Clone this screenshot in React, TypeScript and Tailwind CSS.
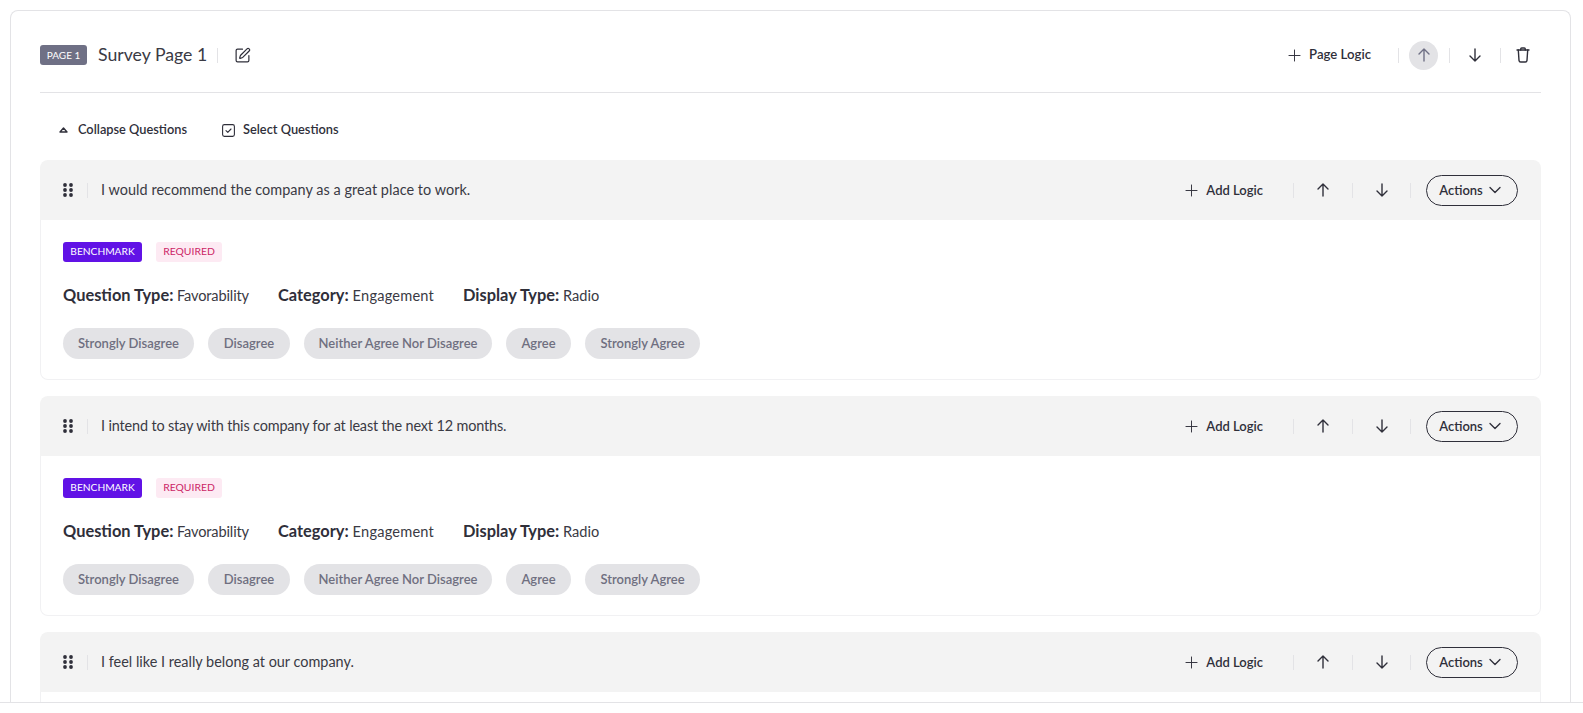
import { ChevronDown, Plus, SquarePen } from "lucide-react";

// tracking values even out width differences with the substitute font
const questions = [
  { text: "I would recommend the company as a great place to work.", className: "tracking-[0.04px]" },
  { text: "I intend to stay with this company for at least the next 12 months.", className: "tracking-[-0.150px]" },
  { text: "I feel like I really belong at our company.", className: "" },
];

const answers = [
  { label: "Strongly Disagree", className: "w-[131px]" },
  { label: "Disagree", className: "w-[82px]" },
  { label: "Neither Agree Nor Disagree", className: "w-[188px]" },
  { label: "Agree", className: "w-[65px]" },
  { label: "Strongly Agree", className: "w-[115px]" },
];

function Sep({ className = "h-[15px]" }: { className?: string }) {
  return <span className={`w-px bg-[#e3e3e6] ${className}`} />;
}

function DragDots() {
  return (
    <svg width="10" height="14" viewBox="0 0 10 14" fill="#2f2f3a">
      <circle cx="2" cy="2" r="1.9" />
      <circle cx="8" cy="2" r="1.9" />
      <circle cx="2" cy="7" r="1.9" />
      <circle cx="8" cy="7" r="1.9" />
      <circle cx="2" cy="12" r="1.9" />
      <circle cx="8" cy="12" r="1.9" />
    </svg>
  );
}

function TrashIcon() {
  return (
    <svg width="14" height="16" viewBox="0 0 14 16" fill="none" stroke="#2f2f3a" strokeWidth="1.4" strokeLinejoin="round" strokeLinecap="round" className="block">
      <path d="M1 3h12" />
      <path d="M2.300 3l.7 10.400c.1.900.7 1.600 1.600 1.600h4.800c.9 0 1.500-.7 1.600-1.600L11.700 3" />
      <path d="M4.700 3V2c0-.6.4-1 1-1h2.600c.6 0 1 .4 1 1v1" />
    </svg>
  );
}

function Arrow({ down = false, className = "" }: { down?: boolean; className?: string }) {
  return (
    <svg width="12" height="14" viewBox="0 0 12 14" fill="none" stroke="currentColor" strokeWidth="1.4" strokeLinecap="round" strokeLinejoin="round" className={`block ${className}`}>
      {down ? <path d="M6 1v12M1 8l5 5 5-5" /> : <path d="M6 13V1M1 6l5-5 5 5" />}
    </svg>
  );
}

function QuestionCard({ text, textClass, details }: { text: string; textClass: string; details: boolean }) {
  return (
    <div className="mb-[16px] shrink-0">
      <div className="flex h-[60px] items-center rounded-t-lg bg-[#f3f3f3] pl-[23px] pr-[23px]">
        <DragDots />
        <Sep className="ml-[14px] h-[15px]" />
        <span className={`ml-[13px] text-[14.450px] text-[#3a3a44] ${textClass}`}>{text}</span>
        <div className="ml-auto flex items-center text-[#2f2f3a]">
          <Plus size={19} strokeWidth={1.2} />
          <span className="ml-[5.500px] mt-[2px] text-[13px] font-semibold">Add Logic</span>
          <Sep className="ml-[30px] h-[15px]" />
          <Arrow className="ml-[23px] mr-[23px]" />
          <Sep className="h-[15px]" />
          <Arrow down className="mx-[22.500px]" />
          <Sep className="h-[15px]" />
          <button className="ml-[15px] flex h-[31px] w-[92px] items-center justify-center gap-[2px] rounded-full border border-[#2f2f3a] text-[13px] font-semibold">
            <span className="mt-[2px]">Actions</span>
            <ChevronDown size={20} strokeWidth={1.6} />
          </button>
        </div>
      </div>
      <div className="h-[160px] rounded-b-lg border border-t-0 border-[#f1f1f3] bg-white px-[22px] pt-[22px]">
        {details && (
          <>
            <div className="flex gap-[14px]">
              <span className="flex h-[20px] w-[79px] items-center justify-center rounded-[3px] bg-[#6112e6] text-[10.200px] text-white">BENCHMARK</span>
              <span className="flex h-[20px] w-[66px] items-center justify-center rounded-[3px] bg-[#fdeaf3] text-[10.400px] text-[#cc1f66]">REQUIRED</span>
            </div>
            <div className="mt-[23px] flex h-[20px] items-center gap-[29px] text-[14.600px] text-[#3a3a44]">
              <span className="tracking-[-0.150px]"><b className="text-[16.400px] tracking-normal text-[#2f2f3a]">Question Type:</b> Favorability</span>
              <span className="tracking-[0.200px]"><b className="text-[16.400px] tracking-normal text-[#2f2f3a]">Category:</b> Engagement</span>
              <span><b className="text-[16.400px] text-[#2f2f3a]">Display Type:</b> Radio</span>
            </div>
            <div className="mt-[23px] flex gap-[14px]">
              {answers.map((a) => (
                <span key={a.label} className={`flex h-[31px] items-center justify-center rounded-full bg-[#e3e3e6] text-[13px] font-semibold text-[#6f6f80] ${a.className}`}>
                  {a.label}
                </span>
              ))}
            </div>
          </>
        )}
      </div>
    </div>
  );
}

export default function App() {
  return (
    <div className="flex h-[713px] w-full flex-col overflow-hidden bg-white font-['Lato',sans-serif]">
      <div className="min-h-0 flex-1 overflow-hidden pl-[10px] pr-[12px] pt-[10px]">
        <div className="h-full overflow-hidden rounded-t-lg border border-b-0 border-[#e3e3e6] px-[29px]">
          <div className="flex h-[82px] items-center border-b border-[#e3e3e6] pt-[7px] text-[#2f2f3a]">
            <span className="flex h-[20px] w-[47px] items-center justify-center rounded-[3px] bg-[#6f7085] text-[10px] text-white">PAGE 1</span>
            <span className="ml-[11px] text-[17.700px] text-[#3a3a44]">Survey Page 1</span>
            <Sep className="ml-[10px] h-[15px]" />
            <SquarePen size={17} strokeWidth={1.7} className="ml-[16px]" />
            <div className="ml-auto flex items-center">
              <Plus size={19} strokeWidth={1.2} />
              <span className="ml-[5px] text-[13.200px] font-semibold">Page Logic</span>
              <Sep className="ml-[27px] h-[15px]" />
              <span className="ml-[10px] mr-[11px] flex h-[29px] w-[29px] items-center justify-center rounded-full bg-[#e3e3e6] text-[#6f7085]">
                <Arrow />
              </span>
              <Sep className="h-[15px]" />
              <Arrow down className="mx-[19px]" />
              <Sep className="h-[15px]" />
              <span className="ml-[15px] mr-[11px]"><TrashIcon /></span>
            </div>
          </div>
          <div className="flex h-[67px] items-center pl-[19px] pt-[7px] text-[12.800px] font-semibold text-[#2f2f3a]">
            <svg width="9" height="6" viewBox="0 0 9 6" fill="none" stroke="#2f2f3a" strokeWidth="1.4" strokeLinejoin="round">
              <path d="M4.500 1L1 5h7z" />
            </svg>
            <span className="ml-[10px]">Collapse Questions</span>
            <svg width="13" height="13" viewBox="0 0 13 13" fill="none" stroke="#2f2f3a" strokeWidth="1.1" className="ml-[35px]">
              <rect x="0.600" y="0.600" width="11.800" height="11.800" rx="1.800" />
              <path d="M4 6.700l1.800 1.700L9 5" strokeLinecap="round" strokeLinejoin="round" />
            </svg>
            <span className="ml-[8px]">Select Questions</span>
          </div>
          {questions.map((q, i) => (
            <QuestionCard key={q.text} text={q.text} textClass={q.className} details={i < 2} />
          ))}
        </div>
      </div>
      <div className="h-[11px] shrink-0 border-t border-[#e3e3e6] bg-white" />
    </div>
  );
}
